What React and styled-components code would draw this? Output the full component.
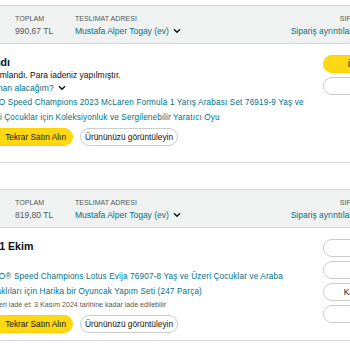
import React from "react";
import styled, { createGlobalStyle } from "styled-components";

const GlobalStyle = createGlobalStyle`
  html, body {
    margin: 0;
    padding: 0;
    overflow: hidden;
    background: #fff;
  }
  body {
    font-family: "Liberation Sans", Arial, sans-serif;
    color: #0f1111;
  }
`;

// page is scrolled sideways, so the left part of each card is out of view
const Page = styled.div`
  width: 548px;
  margin-left: -87px;
  padding-top: 5px;
  display: flex;
  flex-direction: column;
  gap: 26px;
`;

const Card = styled.div`
  border: 1px solid #d5d9d9;
  border-radius: 6px;
  overflow: hidden;
`;

const Header = styled.div`
  background: #f0f2f2;
  border-bottom: 1px solid #d5d9d9;
  padding: 8px 13px 6px;
  display: flex;
  gap: 16px;
`;

const HeaderCol = styled.div`
  width: ${(p) => p.$w || "auto"};
  margin-left: ${(p) => (p.$right ? "auto" : "0")};
  text-align: ${(p) => (p.$right ? "right" : "left")};
  display: flex;
  flex-direction: column;
`;

const Label = styled.span`
  font-size: 7.1px;
  line-height: 11px;
  text-transform: uppercase;
  color: #565959;
  white-space: nowrap;
`;

const Value = styled.span`
  font-size: 8.5px;
  line-height: 12px;
  color: ${(p) => (p.$link ? "#007185" : "#565959")};
  white-space: nowrap;
  display: flex;
  align-items: center;
  justify-content: ${(p) => (p.$end ? "flex-end" : "flex-start")};
  gap: 4px;
`;

const Sep = styled.span`
  color: #d5d9d9;
  margin: 0 1px;
`;

const Body = styled.div`
  display: flex;
  gap: 10px;
  padding: 11px 13px ${(p) => p.$pb || "16px"};
`;

const Main = styled.div`
  width: 386px;
  flex: none;
  display: flex;
  flex-direction: column;
`;

const Status = styled.h3`
  margin: 0;
  font-size: 10.6px;
  line-height: 14px;
  font-weight: 700;
  white-space: nowrap;
`;

const Sub = styled.div`
  font-size: 8.5px;
  line-height: 13px;
  white-space: nowrap;
`;

const SubLink = styled.div`
  font-size: 8.5px;
  line-height: 12px;
  color: #007185;
  white-space: nowrap;
  display: flex;
  align-items: center;
  gap: 4px;
`;

const ProductRow = styled.div`
  display: flex;
  align-items: flex-start;
  gap: 10px;
  margin-top: ${(p) => p.$mt || "1px"};
`;

const Thumb = styled.div`
  width: 45px;
  height: 45px;
  flex: none;
  background: #f3f3f3;
  border-radius: 2px;
`;

const Info = styled.div`
  width: 326px;
  flex: none;
  display: flex;
  flex-direction: column;
  align-items: flex-start;
`;

const Title = styled.a`
  font-size: 8.2px;
  line-height: 15px;
  letter-spacing: 0.15px;
  color: #007185;
  text-decoration: none;
`;

const Note = styled.div`
  font-size: 7.1px;
  line-height: 12px;
  color: #565959;
  white-space: nowrap;
`;

const Buttons = styled.div`
  display: flex;
  gap: 7px;
  margin-left: -4px;
  margin-top: ${(p) => p.$mt || "3px"};
`;

const Button = styled.button`
  width: ${(p) => p.$w || "auto"};
  height: 18px;
  border-radius: 9px;
  padding: ${(p) => (p.$primary ? "0 6px 0 0" : "0 5px")};
  border: 1px solid ${(p) => (p.$primary ? "#fcd200" : "#c9cdcd")};
  background: ${(p) => (p.$primary ? "#ffd814" : "#fff")};
  font-family: inherit;
  font-size: 8.3px;
  color: #0f1111;
  display: flex;
  align-items: center;
  justify-content: ${(p) => (p.$end ? "flex-end" : "center")};
  gap: 7px;
  white-space: nowrap;
  box-sizing: border-box;
  flex: none;
`;

const Side = styled.div`
  width: 124px;
  flex: none;
  display: flex;
  flex-direction: column;
  gap: 4px;
`;

const Pill = styled(Button)`
  width: 100%;
  padding: 0 5px;
`;

const Chevron = () => (
  <svg width="8" height="6" viewBox="0 0 8 6">
    <path d="M1 1.3l3 3 3-3" fill="none" stroke="#0f1111" strokeWidth="1.4" />
  </svg>
);

const BuyAgain = () => (
  <svg width="12" height="11" viewBox="0 0 14 12">
    <path d="M3 6a4 4 0 0 1 7-2.6" fill="none" stroke="#0f1111" strokeWidth="1.3" />
    <path d="M11 6a4 4 0 0 1-7 2.6" fill="none" stroke="#0f1111" strokeWidth="1.3" />
    <path d="M10.6 1v2.8H7.8M3.4 11V8.2h2.8" fill="none" stroke="#0f1111" strokeWidth="1.3" />
  </svg>
);

const OrderHeader = ({ date, total, number }) => (
  <Header>
    <HeaderCol $w="72px">
      <Label>Sipariş verildi</Label>
      <Value>{date}</Value>
    </HeaderCol>
    <HeaderCol $w="44px">
      <Label>Toplam</Label>
      <Value>{total}</Value>
    </HeaderCol>
    <HeaderCol>
      <Label>Teslimat adresi</Label>
      <Value $link>
        Mustafa Alper Togay (ev) <Chevron />
      </Value>
    </HeaderCol>
    <HeaderCol $right>
      <Label>Sipariş # {number}</Label>
      <Value $link $end>
        Sipariş ayrıntılarını görüntüleyin<Sep>|</Sep>Fatura
      </Value>
    </HeaderCol>
  </Header>
);

const OrderButtons = ({ mt }) => (
  <Buttons $mt={mt}>
    <Button $primary $end $w="95px">
      <BuyAgain />
      Tekrar Satın Alın
    </Button>
    <Button $w="98px">Ürününüzü görüntüleyin</Button>
  </Buttons>
);

export default function App() {
  return (
    <>
      <GlobalStyle />
      <Page>
        <Card>
          <OrderHeader date="12 Ekim 2024" total="990,67 TL" number="403-5913781-2384346" />
          <Body>
            <Main>
              <Status>İade tamamlandı</Status>
              <Sub>İade işleminiz tamamlandı. Para iadeniz yapılmıştır.</Sub>
              <SubLink>
                Para iademi ne zaman alacağım? <Chevron />
              </SubLink>
              <ProductRow>
                <Thumb />
                <Info>
                  <Title href="#">
                    LEGO Speed Champions 2023 McLaren Formula 1 Yarış Arabası Set 76919-9 Yaş ve
                    Üzeri Çocuklar için Koleksiyonluk ve Sergilenebilir Yaratıcı Oyu
                  </Title>
                  <OrderButtons />
                </Info>
              </ProductRow>
            </Main>
            <Side>
              <Pill $primary>İade ayrıntılarını gör</Pill>
              <Pill>Satıcıya ulaşın</Pill>
            </Side>
          </Body>
        </Card>

        <Card>
          <OrderHeader date="18 Ekim 2024" total="819,80 TL" number="404-7720315-5561927" />
          <Body $pb="7px">
            <Main>
              <Status>Teslim edildi 21 Ekim</Status>
              <ProductRow $mt="16px">
                <Thumb />
                <Info>
                  <Title href="#">
                    LEGO® Speed Champions Lotus Evija 76907-8 Yaş ve Üzeri Çocuklar ve Araba
                    Meraklıları için Harika bir Oyuncak Yapım Seti (247 Parça)
                  </Title>
                  <Note>Ürünleri iade et: 3 Kasım 2024 tarihine kadar iade edilebilir</Note>
                  <OrderButtons mt="4px" />
                </Info>
              </ProductRow>
            </Main>
            <Side>
              <Pill>Ürün desteği alın</Pill>
              <Pill>İade veya değişim</Pill>
              <Pill>Kargo geri bildirimi ver</Pill>
              <Pill>Ürün yorumu yazın</Pill>
            </Side>
          </Body>
        </Card>
      </Page>
    </>
  );
}
